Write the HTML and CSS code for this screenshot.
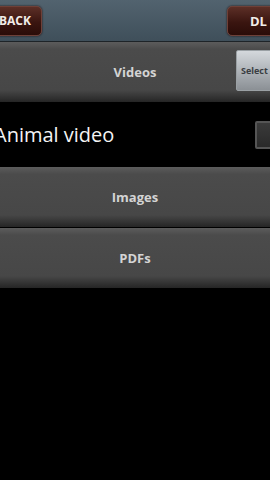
FILE: index.html
```html
<!DOCTYPE html>
<html lang="en">

<head>
    <meta charset="UTF-8">
    <meta name="viewport" content="width=device-width, initial-scale=1.0">
    <title>Downloads</title>
    <link rel="stylesheet" href="styles.css">
</head>

<body>
    <div class="topbar">
        <button class="btn back">BACK</button>
        <button class="btn dl">DL</button>
    </div>

    <div class="section">
        <span class="label">Videos</span>
        <button class="select">Select</button>
    </div>
    <div class="row">
        <span class="name">Animal video</span>
        <span class="check"></span>
    </div>

    <div class="section">
        <span class="label">Images</span>
    </div>
    <div class="section">
        <span class="label">PDFs</span>
    </div>
</body>

</html>
```

FILE: styles.css
```css
* {
    margin: 0;
    padding: 0;
    box-sizing: border-box;
}

body {
    width: 270px;
    height: 480px;
    overflow: hidden;
    background: #000;
    font-family: "Open Sans", "DejaVu Sans", sans-serif;
}

.topbar {
    height: 42px;
    display: flex;
    justify-content: space-between;
    align-items: center;
    background: linear-gradient(#52636f, #3f4f5a);
    border-bottom: 1px solid #1e2428;
}

.btn {
    height: 30px;
    border: 1px solid #6e4038;
    border-radius: 5px;
    background: linear-gradient(#5c2f27, #3a1510 55%, #2a0c08);
    color: #f2ece8;
    font-family: inherit;
    font-size: 13px;
    font-weight: bold;
    box-shadow: 0 0 2px #1a0806;
}

.back {
    width: 58px;
    margin-left: -16px;
    padding-right: 10px;
    text-align: right;
    font-size: 12px;
}

.dl {
    width: 58px;
    margin-right: -15px;
    padding-left: 22px;
    text-align: left;
}

.section {
    height: 60px;
    display: flex;
    align-items: center;
    justify-content: center;
    position: relative;
    background: linear-gradient(#5c5c5c, #4b4b4b 12%, #474747 80%, #333 92%, #252525);
}

.section + .section {
    margin-top: 1px;
}

.label {
    color: #d4d4d4;
    font-size: 13px;
    font-weight: bold;
}

.select {
    position: absolute;
    left: 236px;
    top: 8px;
    width: 44px;
    height: 41px;
    padding-left: 4px;
    text-align: left;
    border: 1px solid #9aa0a4;
    border-radius: 2px;
    background: linear-gradient(#d4d8dc, #a8adb2 60%, #8b9095);
    color: #3a3e42;
    font-family: inherit;
    font-size: 9px;
    font-weight: bold;
}

.row {
    height: 65px;
    display: flex;
    align-items: center;
    justify-content: space-between;
    background: #000;
}

.name {
    margin-left: -6px;
    color: #f4f4f4;
    font-size: 20px;
}

.check {
    width: 28px;
    height: 28px;
    margin-right: -13px;
    border: 2px solid #555;
    border-radius: 2px;
    background: linear-gradient(#3a3a3a, #2a2a2a);
}
```
